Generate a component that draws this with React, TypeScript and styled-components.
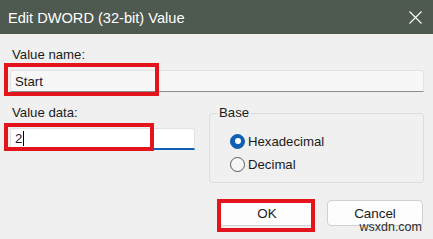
import * as React from "react"
import styled, { createGlobalStyle } from "styled-components"

const colors = {
  titleBar: "#4e594f",
  dialog: "#f0f0f0",
  text: "#1b1b1b",
  highlight: "#e4141d",
  accent: "#0f5fb3",
  fieldBorder: "#e2e2e2"
}

const GlobalStyle = createGlobalStyle`
  html, body {
    margin: 0;
    padding: 0;
    background: ${colors.dialog};
  }
  * {
    box-sizing: border-box;
  }
`

const Dialog = styled.div`
  position: relative;
  width: 433px;
  height: 239px;
  overflow: hidden;
  background: ${colors.dialog};
  font-family: "Liberation Sans", Arial, sans-serif;
  font-size: 13.2px;
  color: ${colors.text};
  display: flex;
  flex-direction: column;
`

const TitleBar = styled.header`
  height: 34px;
  flex: none;
  display: flex;
  align-items: center;
  justify-content: space-between;
  padding: 0 11px 0 8px;
  background: ${colors.titleBar};
  color: #ffffff;
`

const Title = styled.h1`
  margin: 0;
  font-size: 14.6px;
  font-weight: normal;
  line-height: 18px;
  padding-top: 1px;
`

const CloseButton = styled.span`
  display: flex;
  width: 13px;
  height: 13px;
`

const Body = styled.div`
  flex: 1;
  padding: 13px 9px 0 10px;
  display: flex;
  flex-direction: column;
`

const Label = styled.label`
  display: block;
  line-height: 16px;
  padding-left: 2px;
`

const Field = styled.div<{ $disabled?: boolean; $focused?: boolean }>`
  position: relative;
  height: 22px;
  margin-top: 7px;
  display: flex;
  align-items: center;
  padding-left: 4px;
  background: ${props => (props.$disabled ? "#f7f7f7" : "#ffffff")};
  border: 1px solid ${colors.fieldBorder};
  border-bottom: ${props => (props.$focused ? `2px solid ${colors.accent}` : "1px solid #8c8c8c")};
  border-radius: 3px 3px 0 0;
`

const Caret = styled.span`
  display: inline-block;
  width: 1px;
  height: 15px;
  margin-left: 1px;
  background: #000000;
`

const Highlight = styled.span<{ $left: number; $top: number; $width: number; $height: number }>`
  position: absolute;
  left: ${props => props.$left}px;
  top: ${props => props.$top}px;
  width: ${props => props.$width}px;
  height: ${props => props.$height}px;
  border: 4px solid ${colors.highlight};
  pointer-events: none;
`

const DataRow = styled.div`
  display: grid;
  grid-template-columns: 185px 215px;
  column-gap: 14px;
  margin-top: 13px;
`

const DataColumn = styled.div`
  display: flex;
  flex-direction: column;
`

const GroupBox = styled.fieldset`
  margin: 0;
  padding: 0 0 7px 0;
  border: 1px solid #dcdcdc;
  border-radius: 3px;
  min-width: 0;
`

const Legend = styled.legend`
  margin-left: 7px;
  padding: 0 2px;
  line-height: 16px;
`

const RadioList = styled.div`
  display: flex;
  flex-direction: column;
  padding: 8px 0 0 20px;
`

const RadioRow = styled.div`
  height: 22px;
  display: flex;
  align-items: center;
  gap: 3px;
  margin-top: 1px;
`

const RadioCircle = styled.span<{ $checked?: boolean }>`
  width: 15px;
  height: 15px;
  border-radius: 50%;
  flex: none;
  display: flex;
  align-items: center;
  justify-content: center;
  background: ${props => (props.$checked ? colors.accent : "#f6f6f6")};
  border: 1px solid ${props => (props.$checked ? colors.accent : "#5a5a5a")};

  &::after {
    content: "";
    display: ${props => (props.$checked ? "block" : "none")};
    width: 6px;
    height: 6px;
    border-radius: 50%;
    background: #ffffff;
  }
`

const ButtonRow = styled.div`
  display: flex;
  justify-content: flex-end;
  gap: 12px;
  margin-top: 17px;
  padding-right: 1px;
`

const Button = styled.button`
  position: relative;
  width: 96px;
  height: 26px;
  background: #fdfdfd;
  border: 1px solid #d0d0d0;
  border-radius: 4px;
  font-family: inherit;
  font-size: 13.4px;
  color: ${colors.text};
  padding: 0;
`

const Watermark = styled.span`
  position: absolute;
  right: 11px;
  bottom: 5px;
  font-size: 12.5px;
  line-height: 14px;
  color: #2d2d2d;
`

function CloseIcon() {
  return (
    <svg width="13" height="13" viewBox="0 0 13 13">
      <path d="M0.5 0.5 L12.5 12.5 M12.5 0.5 L0.5 12.5" stroke="#ffffff" strokeWidth="1.1" />
    </svg>
  )
}

export default function App() {
  return (
    <Dialog>
      <GlobalStyle />
      <TitleBar>
        <Title>Edit DWORD (32-bit) Value</Title>
        <CloseButton>
          <CloseIcon />
        </CloseButton>
      </TitleBar>
      <Body>
        <Label>Value name:</Label>
        <Field $disabled>
          Start
          <Highlight $left={-7} $top={-8} $width={155} $height={33} />
        </Field>
        <DataRow>
          <DataColumn>
            <Label>Value data:</Label>
            <Field $focused>
              2<Caret />
              <Highlight $left={-7} $top={-6} $width={150} $height={28} />
            </Field>
          </DataColumn>
          <GroupBox>
            <Legend>Base</Legend>
            <RadioList>
              <RadioRow>
                <RadioCircle $checked />
                Hexadecimal
              </RadioRow>
              <RadioRow>
                <RadioCircle />
                Decimal
              </RadioRow>
            </RadioList>
          </GroupBox>
        </DataRow>
        <ButtonRow>
          <Button>
            OK
            <Highlight $left={-3} $top={-2} $width={98} $height={33} />
          </Button>
          <Button>Cancel</Button>
        </ButtonRow>
      </Body>
      <Watermark>wsxdn.com</Watermark>
    </Dialog>
  )
}
